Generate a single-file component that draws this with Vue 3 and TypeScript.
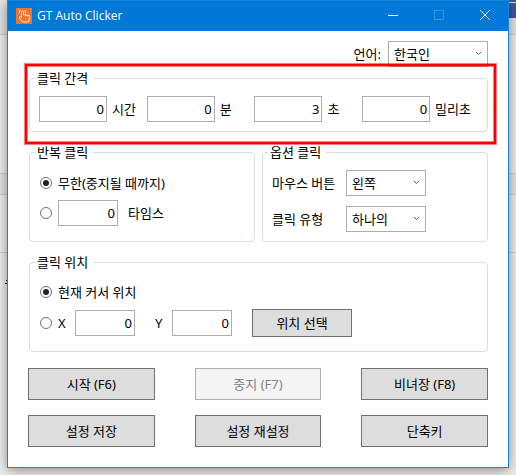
<script setup lang="ts">
import { reactive, ref } from 'vue'

interface IntervalField {
  id: string
  label: string
  value: string
}

interface Action {
  id: string
  label: string
  disabled: boolean
}

const languages: string[] = ['한국인', 'English']
const mouseButtons: string[] = ['왼쪽', '오른쪽']
const clickTypes: string[] = ['하나의', '더블']

const language = ref('한국인')
const mouseButton = ref('왼쪽')
const clickType = ref('하나의')
const repeatMode = ref('infinite')
const repeatCount = ref('0')
const positionMode = ref('current')
const position = reactive({ x: '0', y: '0' })

const intervals = reactive<IntervalField[]>([
  { id: 'hours', label: '시간', value: '0' },
  { id: 'minutes', label: '분', value: '0' },
  { id: 'seconds', label: '초', value: '3' },
  { id: 'millis', label: '밀리초', value: '0' },
])

const actions: Action[] = [
  { id: 'start', label: '시작 (F6)', disabled: false },
  { id: 'stop', label: '중지 (F7)', disabled: true },
  { id: 'recorder', label: '비녀장 (F8)', disabled: false },
  { id: 'save', label: '설정 저장', disabled: false },
  { id: 'reset', label: '설정 재설정', disabled: false },
  { id: 'hotkey', label: '단축키', disabled: false },
]
</script>

<template>
  <div class="desktop">
    <div class="tab-corner"></div>
    <svg class="stray" width="2" height="5" viewBox="0 0 2 5" aria-hidden="true">
      <path d="M1 .5h1M0 3.5h2" stroke="#222" fill="none" />
    </svg>
    <main class="window">
      <header class="titlebar">
        <svg class="app-icon" width="16" height="16" viewBox="0 0 16 16" aria-hidden="true">
          <rect width="16" height="16" fill="#ee7430" />
          <path
            d="M5.500 9.500V3.500q1-1.500 2 0V7M7.500 6.500h2V8M9.500 7h2v1.500M11.500 7.500h2V11q0 3-3 3H8q-1.500 0-2.500-1.500L3.500 10V9q1-.8 2 .5M3.500 5.500v-3h1M8.500 2.500h1v3"
            fill="none"
            stroke="#fff3e6"
            stroke-width=".9"
          />
        </svg>
        <h1 class="title">GT Auto Clicker</h1>
        <div class="caption-buttons">
          <button type="button" class="caption" aria-label="최소화">
            <svg width="10" height="10" viewBox="0 0 10 10"><path d="M0 5.5h10" stroke="#fff" /></svg>
          </button>
          <button type="button" class="caption" aria-label="최대화" disabled>
            <svg width="10" height="10" viewBox="0 0 10 10">
              <rect x=".5" y=".5" width="9" height="9" fill="none" stroke="#3393df" />
            </svg>
          </button>
          <button type="button" class="caption" aria-label="닫기">
            <svg width="10" height="10" viewBox="0 0 10 10"><path d="M0 0l10 10M10 0L0 10" stroke="#fff" /></svg>
          </button>
        </div>
      </header>

      <form class="content" @submit.prevent>
        <div class="language">
          <label for="language">언어:</label>
          <span class="combo wide">
            <select id="language" v-model="language">
              <option v-for="item in languages" :key="item">{{ item }}</option>
            </select>
            <svg class="chevron" width="7" height="5" viewBox="0 0 7 5"><path d="M1 1l2.500 2.500L6 1" /></svg>
          </span>
        </div>

        <fieldset class="group interval">
          <legend>클릭 간격</legend>
          <div class="interval-row">
            <div v-for="field in intervals" :key="field.id" class="interval-field">
              <input :id="field.id" v-model="field.value" class="number" type="text" inputmode="numeric" />
              <label :for="field.id">{{ field.label }}</label>
            </div>
          </div>
        </fieldset>

        <div class="columns">
          <fieldset class="group">
            <legend>반복 클릭</legend>
            <div class="row">
              <input id="infinite" v-model="repeatMode" class="radio" type="radio" name="repeat" value="infinite" />
              <label for="infinite">무한(중지될 때까지)</label>
            </div>
            <div class="row times">
              <input v-model="repeatMode" class="radio" type="radio" name="repeat" value="times" aria-label="타임스" />
              <input id="times" v-model="repeatCount" class="number small" type="text" inputmode="numeric" />
              <label for="times">타임스</label>
            </div>
          </fieldset>

          <fieldset class="group">
            <legend>옵션 클릭</legend>
            <div class="option-grid">
              <label for="mouse-button">마우스 버튼</label>
              <span class="combo">
                <select id="mouse-button" v-model="mouseButton">
                  <option v-for="item in mouseButtons" :key="item">{{ item }}</option>
                </select>
                <svg class="chevron" width="7" height="5" viewBox="0 0 7 5"><path d="M1 1l2.500 2.500L6 1" /></svg>
              </span>
              <label for="click-type">클릭 유형</label>
              <span class="combo">
                <select id="click-type" v-model="clickType">
                  <option v-for="item in clickTypes" :key="item">{{ item }}</option>
                </select>
                <svg class="chevron" width="7" height="5" viewBox="0 0 7 5"><path d="M1 1l2.500 2.500L6 1" /></svg>
              </span>
            </div>
          </fieldset>
        </div>

        <fieldset class="group position">
          <legend>클릭 위치</legend>
          <div class="row current">
            <input id="current" v-model="positionMode" class="radio" type="radio" name="position" value="current" />
            <label for="current">현재 커서 위치</label>
          </div>
          <div class="row coords">
            <input v-model="positionMode" class="radio" type="radio" name="position" value="fixed" aria-label="X Y" />
            <label class="axis" for="pos-x">X</label>
            <input id="pos-x" v-model="position.x" class="number small" type="text" inputmode="numeric" />
            <label class="axis y-axis" for="pos-y">Y</label>
            <input id="pos-y" v-model="position.y" class="number small" type="text" inputmode="numeric" />
            <button type="button" class="button pick">위치 선택</button>
          </div>
        </fieldset>

        <div class="actions">
          <button v-for="action in actions" :key="action.id" type="button" class="button" :disabled="action.disabled">
            {{ action.label }}
          </button>
        </div>
      </form>
    </main>
  </div>
</template>

<style>
body {
  margin: 0;
}
</style>

<style scoped>
.desktop {
  box-sizing: border-box;
  display: flex;
  position: relative;
  min-height: 100vh;
  padding: 0 7px 7px;
  overflow: hidden;
  background: linear-gradient(
    #e6e6e6 34px, #d2d2d2 34px 35px, #f0f0f0 35px 173px, #d2d2d2 173px 174px,
    #e6e6e6 174px 194px, #d2d2d2 194px 195px, #f0f0f0 195px 252px, #d2d2d2 252px 253px, #f0f0f0 253px
  );
  color: #000;
  font: 13px/17px "Noto Sans", "Noto Sans CJK KR", sans-serif;
}
.tab-corner {
  position: absolute;
  top: 0;
  right: 0;
  width: 8px;
  height: 18px;
  background: linear-gradient(#3f58a0 2px, #d8dcea 2px 3px, #3f58a0 3px);
}
.stray {
  position: absolute;
  left: 5px;
  top: 280px;
}
.window {
  box-sizing: border-box;
  position: relative;
  flex: 1;
  min-width: 0;
  border: 1px solid #1883d7;
  border-top: 0;
  background: #fff;
  box-shadow: 0 2px 12px rgba(0, 0, 0, 0.45);
}
.titlebar {
  box-sizing: border-box;
  display: flex;
  align-items: center;
  height: 31px;
  padding-left: 8px;
  background: #0078d7;
  box-shadow: inset 0 1px #1883d7;
  color: #fff;
}
.title {
  flex: 1;
  margin: 0 0 0 5px;
  font: 12px/17px "Open Sans", "Noto Sans", sans-serif;
}
.caption-buttons {
  display: flex;
}
.caption {
  display: grid;
  place-items: center;
  width: 46px;
  height: 31px;
  padding: 0 0 2px;
  border: 0;
  background: none;
}
.content {
  padding: 10px 20px 19px;
}
.language {
  display: flex;
  justify-content: flex-end;
  align-items: center;
  gap: 7px;
}
.combo {
  display: grid;
  align-items: center;
  width: 80px;
}
.combo.wide {
  width: 100px;
}
.combo select,
.chevron {
  grid-area: 1 / 1;
}
.combo select {
  box-sizing: border-box;
  appearance: none;
  width: 100%;
  height: 26px;
  padding: 0 18px 0 5px;
  border: 1px solid #acacac;
  border-radius: 0;
  background: #fff;
  color: inherit;
  font: inherit;
}
.chevron {
  justify-self: end;
  margin-right: 6px;
  margin-bottom: 2px;
  fill: none;
  stroke: #606060;
  pointer-events: none;
}
.group {
  box-sizing: border-box;
  min-width: 0;
  margin: 0 0 0 1px;
  padding: 9px;
  border: 1px solid #d5dfe5;
  border-radius: 4px;
}
.group legend {
  margin-left: -4px;
  padding: 0 5px 0 2px;
}
.interval {
  position: relative;
  margin-top: 3px;
}
.interval::after {
  content: "";
  position: absolute;
  inset: -23px -9px -13px -5px;
  border: 2px solid #f00;
  box-shadow: 0 0 0 1px rgba(255, 0, 0, 0.5), inset 0 0 0 1px rgba(255, 0, 0, 0.5);
  pointer-events: none;
}
.interval-row {
  display: grid;
  grid-template-columns: repeat(4, 1fr);
  padding-right: 7px;
}
.interval-field {
  display: flex;
  align-items: center;
  gap: 5px;
  white-space: nowrap;
}
.number {
  box-sizing: border-box;
  width: 68px;
  height: 26px;
  padding: 0 2px;
  border: 1px solid #abadb3;
  background: #fff;
  color: inherit;
  font: inherit;
  text-align: right;
}
.number.small {
  width: 60px;
}
.columns {
  display: grid;
  grid-template-columns: 1fr 1fr;
  gap: 6px;
  margin-top: 12px;
}
.row {
  display: flex;
  align-items: center;
  height: 26px;
  padding-left: 1px;
}
.times {
  margin-top: 4px;
}
.times label {
  margin-left: 10px;
}
.radio {
  display: grid;
  place-items: center;
  appearance: none;
  box-sizing: border-box;
  width: 12px;
  height: 12px;
  margin: 0 6px 0 0;
  border: 1px solid #707070;
  border-radius: 50%;
  background: #fff;
}
.radio:checked::before {
  content: "";
  width: 6px;
  height: 6px;
  border-radius: 50%;
  background: #212121;
}
.option-grid {
  display: grid;
  grid-template-columns: 74px auto;
  align-items: center;
  gap: 10px 0;
}
.position {
  margin-top: 12px;
  padding-bottom: 14px;
}
.current {
  height: 24px;
}
.coords {
  height: 28px;
  margin-top: 5px;
}
.axis {
  width: 17px;
}
.y-axis {
  margin-left: 20px;
}
.button {
  height: 32px;
  padding: 0 8px;
  border: 1px solid #707070;
  background: #ddd;
  color: inherit;
  font: inherit;
}
.button:disabled {
  border-color: #adb2b5;
  background: #f4f4f4;
  color: #838383;
}
.pick {
  width: 100px;
  height: 28px;
  margin-left: 20px;
}
.actions {
  display: grid;
  grid-template-columns: repeat(3, 1fr);
  gap: 15px 40px;
  margin-top: 16px;
}
</style>
